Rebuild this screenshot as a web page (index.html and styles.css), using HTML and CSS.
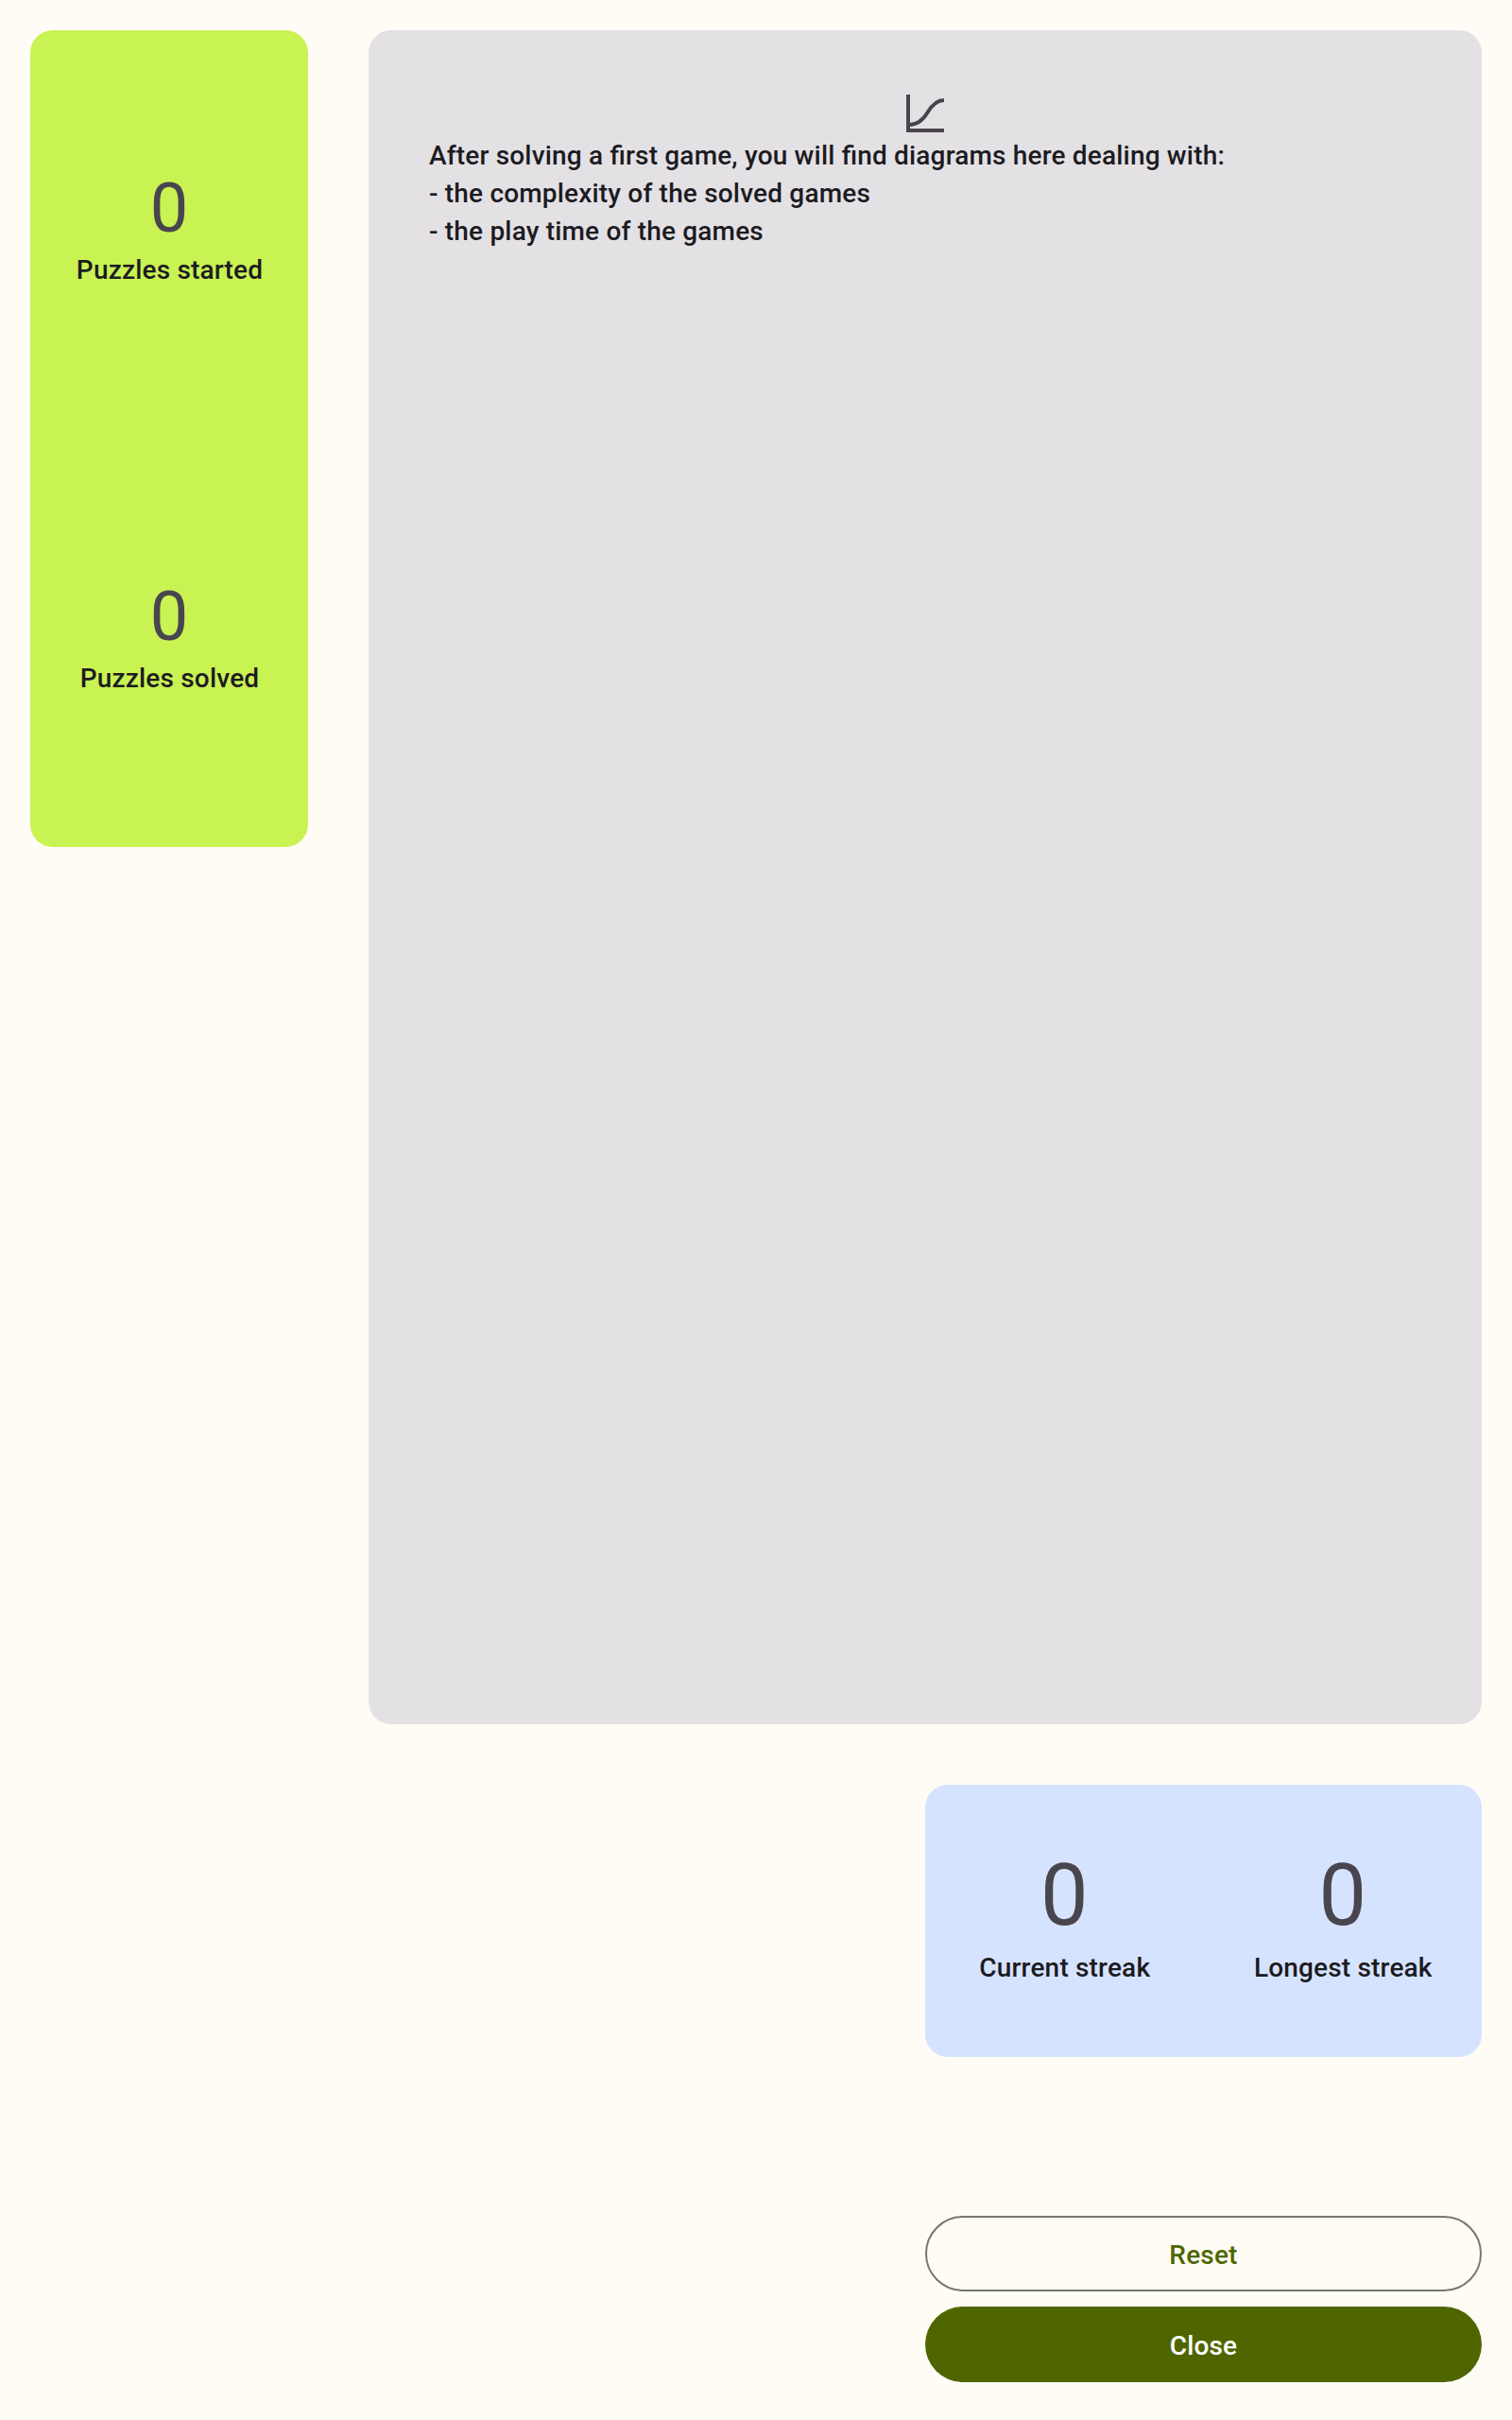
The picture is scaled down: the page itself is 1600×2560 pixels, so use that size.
FILE: index.html
```html
<!DOCTYPE html>
<html lang="en">
<head>
<meta charset="utf-8">
<title>Statistics</title>
<link rel="stylesheet" href="styles.css">
</head>
<body>
<main class="page">
  <div class="overview">
    <section class="card totals">
      <div class="stat"><div class="value">0</div><div class="label">Puzzles started</div></div>
      <div class="stat"><div class="value">0</div><div class="label">Puzzles solved</div></div>
    </section>
    <section class="card charts">
      <svg class="chart-icon" viewBox="0 0 40 40" fill="none" stroke="currentColor" stroke-width="4">
        <path d="M2 0V38H40"/>
        <path d="M3 32C12.500 32 18 26.500 22.500 19S32 6 40 6"/>
      </svg>
      <p class="hint">After solving a first game, you will find diagrams here dealing with:<br>- the complexity of the solved games<br>- the play time of the games</p>
    </section>
  </div>
  <section class="card streaks">
    <div class="stat"><div class="value large">0</div><div class="label">Current streak</div></div>
    <div class="stat"><div class="value large">0</div><div class="label">Longest streak</div></div>
  </section>
  <div class="actions">
    <button class="button outlined">Reset</button>
    <button class="button filled">Close</button>
  </div>
</main>
</body>
</html>
```
FILE: styles.css
```css
* { box-sizing: border-box; }
body {
  margin: 0;
  background: #fffcf5;
  color: #1c1b1f;
  font: 500 28px/40px Roboto, sans-serif;
  font-feature-settings: "liga" 1;
  letter-spacing: 0.18px;
}
.page {
  height: 2560px;
  padding: 32px 32px 40px;
  display: flex;
  flex-direction: column;
  align-items: flex-end;
}
.overview {
  width: 100%;
  display: flex;
  align-items: flex-start;
  gap: 64px;
}
.card { border-radius: 24px; }
.totals { width: 294px; height: 864px; background: #c9f253; display: flex; flex-direction: column; }
.charts {
  flex: 1;
  height: 1792px;
  padding: 68px 64px;
  background: #e4e1e5;
}
.chart-icon { display: block; width: 40px; height: 40px; margin: 0 auto 5px; color: #49454e; }
.hint { margin: 0; }
.stat {
  flex: 1;
  padding-bottom: 12px;
  display: flex;
  flex-direction: column;
  align-items: center;
  justify-content: center;
}
.label { padding-left: 1px; }
.value { font-weight: 400; font-size: 72px; line-height: 88px; color: #49454e; letter-spacing: 0; }
.totals .value { margin: -1px 0 1px; }
.large { font-size: 90px; line-height: 112px; }
.streaks { width: 589px; height: 288px; margin-top: 64px; background: #d6e3ff; display: flex; }
.actions { width: 589px; margin-top: auto; display: flex; flex-direction: column; gap: 16px; }
.button { height: 80px; padding: 3px 0 0; border: 0; border-radius: 40px; font: inherit; letter-spacing: inherit; }
.outlined { border: 2px solid #76786b; background: transparent; color: #4f6600; }
.filled { background: #4f6600; color: #fff; }
```
